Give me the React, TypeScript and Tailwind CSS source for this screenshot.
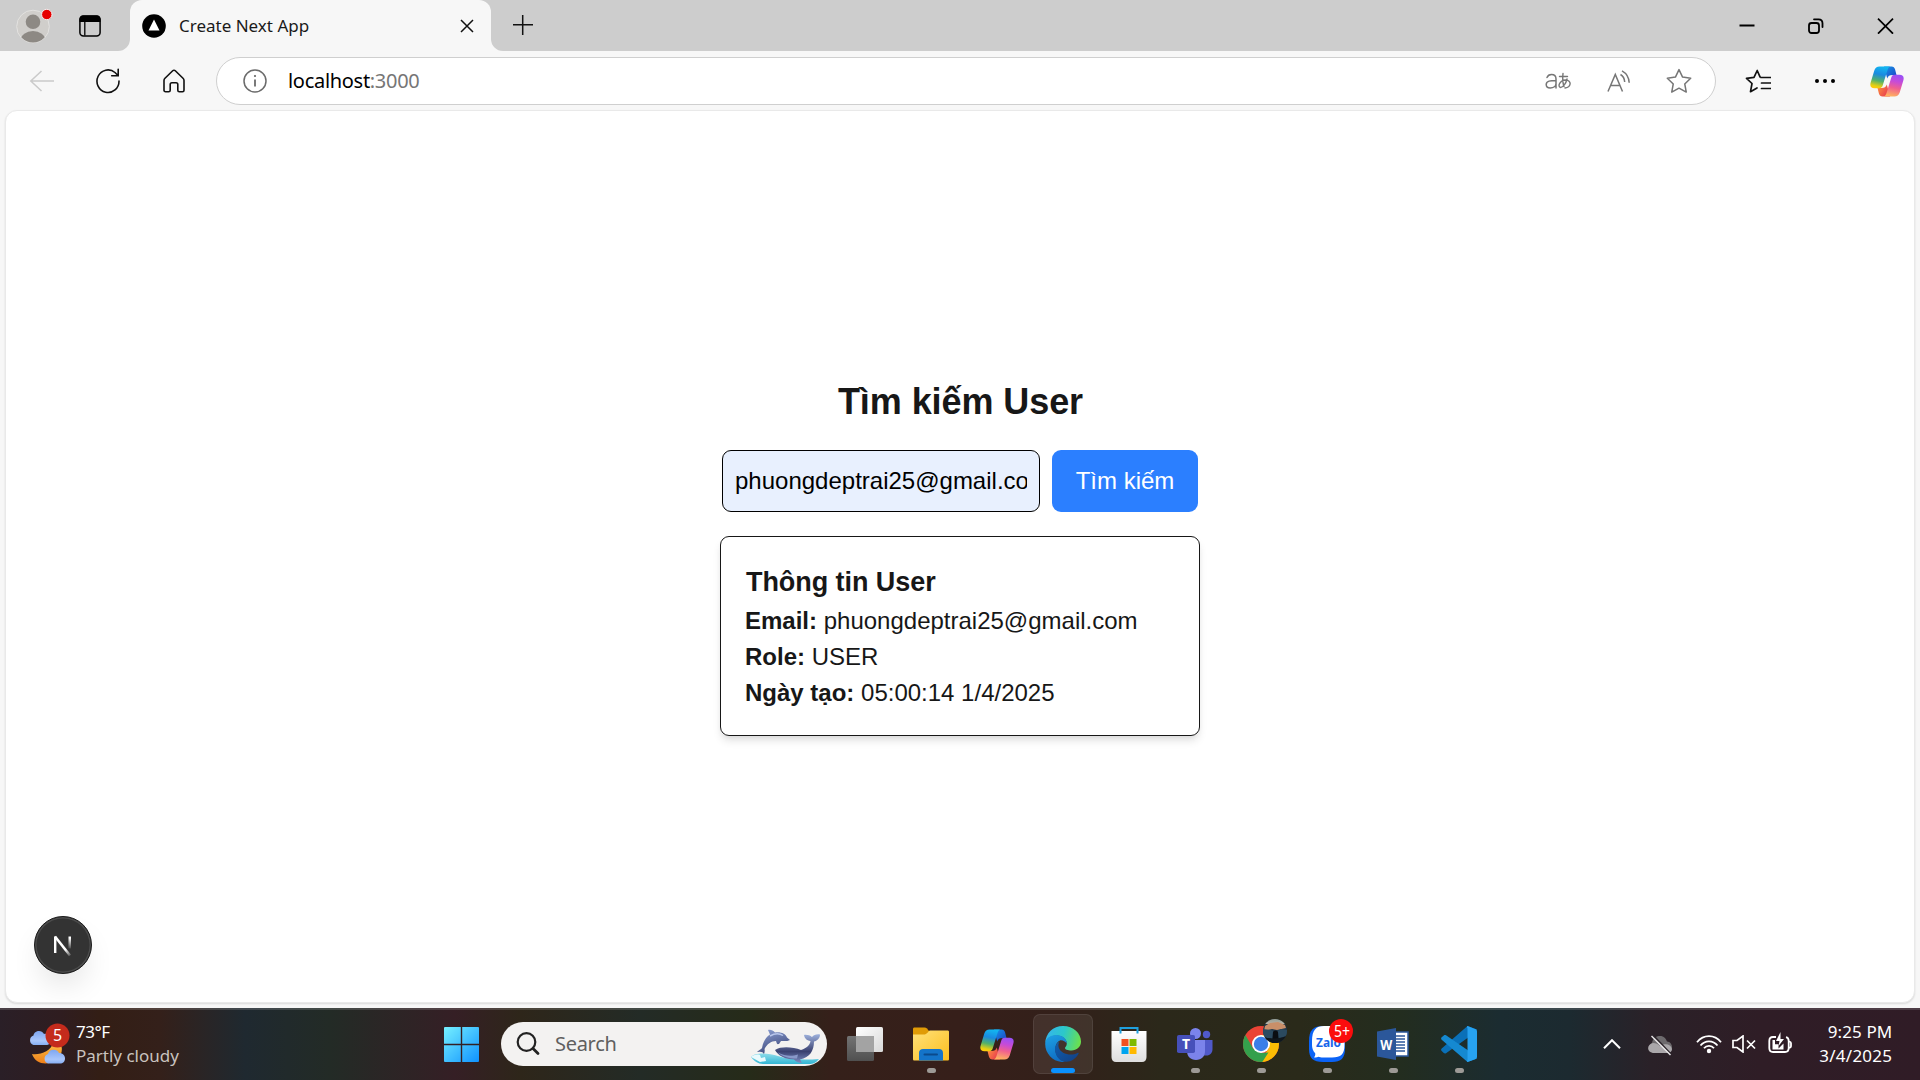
import type { ReactNode } from "react";

const UI = "font-['Noto_Sans','Open_Sans',sans-serif]";

function Avatar() {
  return (
    <svg width="38" height="38" viewBox="0 0 38 38" className="shrink-0">
      <defs>
        <clipPath id="av"><circle cx="18" cy="19.500" r="16" /></clipPath>
      </defs>
      <circle cx="18" cy="19.500" r="16.300" fill="#d0cecb" stroke="#e3e2e0" strokeWidth="1" />
      <circle cx="18" cy="14.800" r="7.300" fill="#8d8984" />
      <ellipse cx="18" cy="33" rx="12.300" ry="9" fill="#8d8984" clipPath="url(#av)" />
      <circle cx="31.800" cy="7.500" r="5.200" fill="#e60000" stroke="#f3f0f0" strokeWidth="1" />
    </svg>
  );
}

function TabActions() {
  return (
    <svg width="22" height="22" viewBox="0 0 22 22" fill="none" className="shrink-0">
      <rect x="0.900" y="1" width="20.200" height="20" rx="3.500" stroke="#000" strokeWidth="1.500" />
      <path d="M.5 7V4.200A3.500 3.500 0 0 1 4 .5h14a3.500 3.500 0 0 1 3.500 3.700V7z" fill="#000" />
      <path d="M5.800 7v13.500" stroke="#000" strokeWidth="1.300" />
    </svg>
  );
}

function Copilot({ id }: { id: string }) {
  return (
    <svg width="34" height="31" viewBox="0 0 34 31" className="shrink-0">
      <defs>
        <linearGradient id={id + "a"} x1="0.5" y1="0" x2="0.300" y2="1">
          <stop offset="0" stopColor="#12b5f0" />
          <stop offset="0.350" stopColor="#1a8ae0" />
          <stop offset="0.650" stopColor="#52b06b" />
          <stop offset="0.900" stopColor="#e6cf12" />
          <stop offset="1" stopColor="#ffcb0b" />
        </linearGradient>
        <linearGradient id={id + "b"} x1="0.600" y1="0" x2="0.400" y2="1">
          <stop offset="0" stopColor="#9a50f5" />
          <stop offset="0.300" stopColor="#c64bd8" />
          <stop offset="0.600" stopColor="#f0608f" />
          <stop offset="1" stopColor="#ffb25f" />
        </linearGradient>
        <linearGradient id={id + "c"} x1="0" y1="0" x2="1" y2="1">
          <stop offset="0" stopColor="#1699e8" />
          <stop offset="1" stopColor="#1d3fc4" />
        </linearGradient>
        <linearGradient id={id + "d"} x1="0" y1="0" x2="1" y2="0.600">
          <stop offset="0" stopColor="#ff9a3d" />
          <stop offset="1" stopColor="#e8384f" />
        </linearGradient>
      </defs>
      <path d="M14 .5h7.500c2 0 3 1 3.600 3l1.400 5.500h-4c-3 0-4.500 1-5.300 3.500z" fill={`url(#${id}c)`} />
      <path d="M20 30.500h-7.500c-2 0-3-1-3.600-3L7.500 22h4c3 0 4.500-1 5.300-3.500z" fill={`url(#${id}d)`} />
      <path d="M9.500.5H20c-1.500.7-2 2-2.500 3.500L12.700 19.500c-.6 2-1.700 2.700-3.500 2.700H4.500C1 22.200-.3 20 .6 16.800L4.300 4.500C5.200 1.700 6.900.5 9.500.5z" fill={`url(#${id}a)`} />
      <path d="M24.500 30.500H14c1.500-.7 2-2 2.500-3.500l4.800-15.500c.6-2 1.700-2.700 3.500-2.700h4.700c3.500 0 4.800 2.200 3.900 5.400l-3.700 12.300c-.9 2.800-2.600 4-5.200 4z" fill={`url(#${id}b)`} />
    </svg>
  );
}

function TabBar() {
  return (
    <div className="flex h-[51px] bg-[#cdcdcd]">
      <div className="flex w-[130px] items-center gap-[26px] pl-[15px]">
        <Avatar />
        <TabActions />
      </div>
      <div className="relative flex w-[361px] items-center rounded-t-[12px] bg-[#f7f7f7] pr-[17px] pl-[12px]">
        <svg width="12" height="12" viewBox="0 0 12 12" className="absolute bottom-0 -left-[12px]"><path d="M12 0v12H0A12 12 0 0 0 12 0z" fill="#f7f7f7" /></svg>
        <svg width="12" height="12" viewBox="0 0 12 12" className="absolute -right-[12px] bottom-0"><path d="M0 0v12h12A12 12 0 0 1 0 0z" fill="#f7f7f7" /></svg>
        <svg width="24" height="24" viewBox="0 0 24 24"><circle cx="12" cy="12" r="11.800" fill="#000" /><path d="M12 5.500l5.500 11h-11z" fill="#fff" /></svg>
        <span className={UI + " ml-[13px] grow text-[17px] text-[#1a1a1a]"}>Create Next App</span>
        <svg width="14" height="14" viewBox="0 0 14 14" stroke="#111" strokeWidth="1.500"><path d="M1 1l12 12M13 1L1 13" /></svg>
      </div>
      <div className="flex grow items-center justify-between pr-[26px] pl-[21px]">
        <svg width="22" height="22" viewBox="0 0 22 22" stroke="#111" strokeWidth="1.500" className="mb-[2px]"><path d="M10.700 1v20M1 10.800h20" /></svg>
        <div className="flex items-center gap-[53px]">
          <svg width="16" height="16" viewBox="0 0 16 16"><path d="M.5 7.500h15" stroke="#000" strokeWidth="2" /></svg>
          <svg width="16" height="16" viewBox="0 0 16 16" fill="none" stroke="#000" strokeWidth="1.800" strokeLinecap="round"><rect x="1" y="5" width="10" height="10" rx="2.500" /><path d="M6 1.300h4.500c2.600 0 4 1.500 4 4V9" /></svg>
          <svg width="17" height="16" viewBox="0 0 17 16" stroke="#000" strokeWidth="1.700"><path d="M1 .7l15 15M16 .7l-15 15" /></svg>
        </div>
      </div>
    </div>
  );
}

const STAR = "M12 1.500l3.300 6.900 7.500 1-5.500 5.300 1.400 7.500L12 18.600l-6.700 3.600 1.400-7.500L1.200 9.400l7.500-1z";

function Toolbar() {
  return (
    <div className="flex h-[59px] items-center bg-[#f7f7f7] pt-[1px]">
      <svg width="26" height="22" viewBox="0 0 26 22" fill="none" stroke="#cacaca" strokeWidth="1.500" className="ml-[29px] shrink-0"><path d="M12.500 1L1.800 11l10.700 10M1.800 11H25" /></svg>
      <svg width="24" height="26" viewBox="0 0 24 26" fill="none" stroke="#111" strokeWidth="1.600" strokeLinecap="round" className="ml-[41px] shrink-0"><path d="M23 13a11 11.300 0 1 1-4-8.500L22 7.500M22.200 1.300v6.500h-6.500" /></svg>
      <svg width="22" height="24" viewBox="0 0 22 24" fill="none" stroke="#111" strokeWidth="1.600" strokeLinejoin="round" className="ml-[43px] shrink-0"><path d="M1 11.500c0-1 .4-1.700 1-2.300l7.700-7.500c.7-.7 1.900-.7 2.600 0L20 9.200c.6.600 1 1.300 1 2.300v9.700c0 .9-.6 1.500-1.500 1.500h-3.200c-.9 0-1.500-.6-1.500-1.500v-5.700c0-1-.7-1.700-1.700-1.700h-4.200c-1 0-1.700.7-1.700 1.700v5.700c0 .9-.6 1.500-1.500 1.500H2.500C1.600 22.700 1 22.100 1 21.200z" /></svg>
      <div className="ml-[31px] flex h-[48px] w-[1500px] shrink-0 items-center rounded-full border border-[#cfcfcf] bg-white pr-[23px] pl-[26px]">
        <svg width="24" height="24" viewBox="0 0 24 24" fill="none" stroke="#6b6b6b" strokeWidth="1.500"><circle cx="12" cy="12" r="11" /><path d="M12 10.500V17.500" strokeWidth="1.800" /><circle cx="12" cy="7" r="0.700" fill="#6b6b6b" strokeWidth="1" /></svg>
        <span className={UI + " ml-[21px] grow text-[20px] tracking-[-0.300px] text-black"}>localhost<span className="text-[#767676]">:3000</span></span>
        <svg width="27" height="20" viewBox="0 0 27 20" fill="none" stroke="#767676" strokeWidth="1.500" strokeLinecap="round">
          <path d="M2 6.500c.8-2 2.300-3 4.500-3 3 0 4.500 1.600 4.500 4.500v9M11 9.500c-5.500 0-9.800.3-9.800 4 0 2.200 1.600 3.500 4 3.500 3.300 0 5.800-2 5.800-4.500" />
          <path d="M14.500 5.500h8M18 2.500c-.5 4-.4 9 1 13M22 8c-1 4.500-4 8.500-6.500 8.500-3.500-.8-.3-7.500 5-7.500 6.500.2 6 7-.5 8" strokeWidth="1.400" />
        </svg>
        <svg width="24" height="22" viewBox="0 0 24 22" fill="none" stroke="#767676" strokeWidth="1.500" className="ml-[35px]">
          <path d="M1 21.500L8.300 4.500 15.500 21.500M3.700 15.500h9.200M13.500 4.500c2.500 1.500 4 4 4.200 7.500M15 .8c4.500 2.500 7 6.500 7.200 12" />
        </svg>
        <svg width="26" height="26" viewBox="0 0 24 24" fill="none" stroke="#767676" strokeWidth="1.400" strokeLinejoin="round" className="ml-[35px]"><path d={STAR} /></svg>
      </div>
      <svg width="26" height="26" viewBox="0 0 26 26" fill="none" stroke="#111" strokeWidth="1.700" strokeLinejoin="round" strokeLinecap="round" className="ml-[29px] shrink-0"><path d="M15 8.800L12.200 2.500 9 9.300l-7.500 1 5.500 5.200-1.500 8.200 6.500-3.800M16 9.500h9.500M16.500 15h9M16.500 20.500h9" /></svg>
      <svg width="22" height="6" viewBox="0 0 22 6" className="ml-[43px] shrink-0"><circle cx="3" cy="3" r="2" /><circle cx="11" cy="3" r="2" /><circle cx="19" cy="3" r="2" /></svg>
      <div className="ml-[34px] shrink-0"><Copilot id="cpa" /></div>
    </div>
  );
}

function Field({ label, value }: { label: string; value: string }) {
  return <p className="text-[24px] leading-[36px] whitespace-nowrap"><strong>{label}</strong> {value}</p>;
}

function NextBadge() {
  return (
    <div className="absolute bottom-[28px] left-[28px] flex size-[58px] items-center justify-center rounded-full border border-[#1c1c1c] bg-[#333] shadow-[0_16px_32px_-8px_rgba(0,0,0,0.14),inset_0_0_0_1.500px_#4c4c4c]">
      <svg width="22" height="24" viewBox="0 0 22 24" fill="none">
        <defs>
          <linearGradient id="n1" x1="8" y1="10" x2="19" y2="23" gradientUnits="userSpaceOnUse"><stop offset="0.500" stopColor="#fff" /><stop offset="1" stopColor="#fff" stopOpacity="0.100" /></linearGradient>
          <linearGradient id="n2" x1="0" y1="2" x2="0" y2="17" gradientUnits="userSpaceOnUse"><stop offset="0.200" stopColor="#fff" /><stop offset="1" stopColor="#fff" stopOpacity="0" /></linearGradient>
        </defs>
        <path d="M3.200 20V3.500" stroke="#fff" strokeWidth="2.400" />
        <path d="M3 3.500l15 19" stroke="url(#n1)" strokeWidth="2.600" />
        <path d="M16.500 3.500h2.500V15.500h-2.500z" fill="url(#n2)" />
      </svg>
    </div>
  );
}

function Page() {
  return (
    <div className="h-[898px] bg-[#f7f7f7] px-[5px]">
      <div className="relative flex h-[893px] flex-col items-center justify-center rounded-[12px] border border-[#e9e9e9] bg-white font-['Liberation_Sans',Arial,sans-serif] text-[#171717] shadow-[0_1px_2px_rgba(0,0,0,0.120)]">
        <h1 className="pl-[1px] text-[36px] leading-[48px] font-bold tracking-[-0.080px]">Tìm kiếm User</h1>
        <div className="mt-[24px] flex gap-[12px]">
          <input type="email" defaultValue="phuongdeptrai25@gmail.com" className="h-[62px] w-[318px] rounded-[9px] border border-black bg-[#e8f0fe] px-[12px] text-[24px] text-black" />
          <button className="h-[62px] w-[146px] rounded-[9px] bg-[#2b7fff] text-[24px] text-white">Tìm kiếm</button>
        </div>
        <div className="mt-[24px] h-[200px] w-[480px] rounded-[9px] border border-[#171717] p-[24px] shadow-[0_6px_9px_-1.500px_rgba(0,0,0,0.100),0_3px_6px_-3px_rgba(0,0,0,0.100)]">
          <h2 className="pl-[1px] text-[27px] leading-[42px] font-bold tracking-[-0.060px]">Thông tin User</h2>
          <Field label="Email:" value="phuongdeptrai25@gmail.com" />
          <Field label="Role:" value="USER" />
          <Field label="Ngày tạo:" value="05:00:14 1/4/2025" />
        </div>
        <NextBadge />
      </div>
    </div>
  );
}

function Weather() {
  return (
    <svg width="42" height="42" viewBox="0 0 42 42" className={UI + " shrink-0"}>
      <defs>
        <linearGradient id="cl" x1="0" y1="0" x2="0" y2="1"><stop offset="0" stopColor="#7ea6f0" /><stop offset="0.700" stopColor="#a9c6fb" /><stop offset="1" stopColor="#86aef2" /></linearGradient>
        <linearGradient id="mo" x1="0" y1="0" x2="0" y2="1"><stop offset="0" stopColor="#ffc54a" /><stop offset="1" stopColor="#ee7f1a" /></linearGradient>
      </defs>
      <path d="M4 31c8 1 19-2 22-13 8 1 9 7 7 13-3 10-24 15-29 0z" fill="url(#mo)" />
      <path d="M5.500 22a5 5 0 0 1 0-9.500c.5-5 8-6.500 10.500-1.500 5-1 7 2 7 5.500s-2 5.500-5 5.500z" fill="url(#cl)" />
      <path d="M20 40.500a5 5 0 0 1 0-9.500c.8-5 9-6 11-1 4 0 6 2.500 6 5.500s-2 5-5 5z" fill="url(#cl)" />
      <circle cx="29.500" cy="12.500" r="12" fill="#c42b1c" />
      <text x="29.500" y="18" fontSize="16" fill="#fff" textAnchor="middle">5</text>
    </svg>
  );
}

function Dolphins() {
  return (
    <svg width="72" height="36" viewBox="0 0 72 36">
      <defs>
        <linearGradient id="dp" x1="0" y1="0" x2="0.400" y2="1"><stop offset="0" stopColor="#8fa3d6" /><stop offset="1" stopColor="#3f4a7c" /></linearGradient>
        <linearGradient id="wh" x1="0" y1="0" x2="0" y2="1"><stop offset="0" stopColor="#9db0dc" /><stop offset="0.600" stopColor="#3a4170" /><stop offset="1" stopColor="#7c8ec4" /></linearGradient>
        <linearGradient id="wt" x1="0" y1="0" x2="0" y2="1"><stop offset="0" stopColor="#8fdcea" /><stop offset="1" stopColor="#31b6d4" /></linearGradient>
      </defs>
      <path d="M1 28c4-5 18-4 27-1 12 4 28 4 41 3-3 4-6 5-10 5H13C8 35 4 32 1 28z" fill="url(#wt)" />
      <path d="M1 28c2-2 6-3 9-2l1 3 4-1 1 4-6 1z" fill="#e9fafd" />
      <path d="M7 23c2-2 4-2.500 5-4 1-6 4-11 8-13.500L18 1c3-.5 5 .5 7 2.500C31 2.500 36 5 37 8.500l3 2.500c-3 1.500-6 1-9 1l-2 3c-2 .5-2 0-3-3-5 0-9 3-11.500 8 .5 2 0 3.500-.5 5-1-2-3-2.500-6-2z" fill="url(#dp)" />
      <path d="M20 7c5-3 10-2.500 13-.5" stroke="#b9c7ec" strokeWidth="1.500" fill="none" />
      <path d="M25 21c6-4 18-3 26 0 6-2 9-5 9.500-9-4-.5-6-3-6.500-6 3-.5 6 .5 8 2 2-2 4-3 8-2.500 0 4-3 6.500-6 7 0 9-4 16-14 18l2 3.500c-4 0-6-1.500-8-3.500-9 0-16-4-19-9.500z" fill="url(#wh)" />
      <path d="M28 23.500c7 4 14 4 20 2l-1 4c-8 0-15-2-19-6z" fill="#8998c9" />
    </svg>
  );
}

function TaskView() {
  return (
    <svg width="36" height="36" viewBox="0 0 36 36">
      <defs><linearGradient id="tv" x1="0" y1="0" x2="1" y2="1"><stop offset="0" stopColor="#fff" /><stop offset="1" stopColor="#d8d8d8" /></linearGradient>
        <linearGradient id="tw" x1="0" y1="0" x2="0" y2="1"><stop offset="0" stopColor="#737373" /><stop offset="1" stopColor="#505050" /></linearGradient></defs>
      <rect x="0" y="10" width="27" height="25" rx="1.500" fill="url(#tw)" />
      <rect x="9" y="1" width="27" height="25" rx="1.500" fill="url(#tv)" />
      <path d="M9 10h18v16H9z" fill="#a3a3a3" />
    </svg>
  );
}

function Explorer() {
  return (
    <svg width="36" height="34" viewBox="0 0 36 34">
      <defs><linearGradient id="fo" x1="0" y1="0" x2="1" y2="1"><stop offset="0" stopColor="#ffe17a" /><stop offset="1" stopColor="#fcbf1e" /></linearGradient></defs>
      <path d="M0 8V2C0 1 .6.500 1.500.5h10c1 0 1.800.3 2.500 1L16 4v4z" fill="#e09b06" />
      <path d="M0 7.500h11c1.500 0 2.300-.6 3.300-1.500l1.200-1.500c.6-.7 1-1 2-1H34.500c1 0 1.500.5 1.500 1.500v27c0 1-.5 1.500-1.500 1.500h-33C.5 33.500 0 33 0 32z" fill="url(#fo)" />
      <path d="M6 33.500V26c0-2.500 1.500-4 4-4h16c2.500 0 4 1.500 4 4v7.500z" fill="#1474c9" />
      <rect x="10.500" y="26.500" width="14.500" height="2" rx="1" fill="#0b4a8c" />
    </svg>
  );
}

function Edge() {
  return (
    <svg width="36" height="36" viewBox="0 0 36 36">
      <defs>
        <linearGradient id="e1" x1="0" y1="0.300" x2="1" y2="0.500"><stop offset="0" stopColor="#35b4ee" /><stop offset="0.500" stopColor="#2cc8c9" /><stop offset="1" stopColor="#6be04e" /></linearGradient>
        <linearGradient id="e2" x1="0.200" y1="0" x2="0.500" y2="1"><stop offset="0" stopColor="#1d9fe3" /><stop offset="1" stopColor="#0f6cc2" /></linearGradient>
        <linearGradient id="e3" x1="0" y1="0" x2="1" y2="1"><stop offset="0" stopColor="#0f5eb0" /><stop offset="1" stopColor="#123f82" /></linearGradient>
      </defs>
      <path d="M.2 17C.8 7 8 0 18 0c10.500 0 18 7.500 18 15.500 0 5.500-4.500 9-9.500 9-4 0-6.500-1-6.500-2.500 0-1 1.800-1.800 1.800-4.500C21.800 13 17 9.500 11.500 9.500 6 9.500 1.500 12.500.2 17z" fill="url(#e1)" />
      <path d="M.2 18c0-5.500 5-9 11-9 6.500 0 10.600 4 10.600 8.500-1.500-2.200-3.500-3.500-6.500-3.300-3 1.300-5 4.300-5 8.800 0 6 4 11 9.700 13C9.500 37 .2 28.500.2 18z" fill="url(#e2)" />
      <path d="M14.500 15.500c-3.500 2-5 5.500-4.500 9 .8 6.500 5.500 11.500 11.500 11.300 5 0 9.500-3.300 12-8 .5-1-.3-1.300-1-.8-7 3.800-17 .5-18.800-5.500-.6-2.300-.2-4.500.8-6z" fill="url(#e3)" />
    </svg>
  );
}

function Store() {
  return (
    <svg width="36" height="36" viewBox="0 0 36 36">
      <defs><linearGradient id="st" x1="0" y1="0" x2="0" y2="1"><stop offset="0" stopColor="#fff" /><stop offset="1" stopColor="#dedede" /></linearGradient></defs>
      <path d="M.5 5h35v26c0 3-1.700 5-4.500 5H5c-2.800 0-4.500-2-4.500-5z" fill="url(#st)" />
      <path d="M9.500 7.500V2h17v5.500" stroke="#1fa0de" strokeWidth="2" fill="none" />
      <path d="M10.500 13h7v7h-7z" fill="#f25022" /><path d="M18.500 13h7v7h-7z" fill="#7fba00" />
      <path d="M10.500 21h7v7h-7z" fill="#00a4ef" /><path d="M18.500 21h7v7h-7z" fill="#ffb900" />
    </svg>
  );
}

function Teams() {
  return (
    <svg width="36" height="36" viewBox="0 0 36 36" className={UI}>
      <circle cx="29.500" cy="8.500" r="3.700" fill="#5059c9" />
      <path d="M24 14h11.500v9c0 4-2.500 6.500-6 6.500H24z" fill="#5059c9" />
      <circle cx="18.500" cy="7.500" r="5.500" fill="#7b83eb" />
      <path d="M10 14h18v11c0 5.500-3.500 9-9 9s-9-3.500-9-9z" fill="#7b83eb" />
      <rect x="0" y="9" width="18" height="18" rx="1.800" fill="#4650ba" />
      <text x="9" y="23" fontSize="14" fontWeight="700" fill="#fff" textAnchor="middle">T</text>
    </svg>
  );
}

function Chrome() {
  return (
    <svg width="44" height="44" viewBox="0 0 44 44">
      <defs>
        <clipPath id="cr"><circle cx="18" cy="26" r="18" /></clipPath>
        <clipPath id="ph"><circle cx="32" cy="13" r="12" /></clipPath>
        <linearGradient id="sky" x1="0" y1="0" x2="0" y2="1"><stop offset="0" stopColor="#8f9a92" /><stop offset="1" stopColor="#b7b3a6" /></linearGradient>
      </defs>
      <g clipPath="url(#cr)">
        <path d="M0 8h36v36H0z" fill="#ea4335" />
        <path d="M18 17h19v28H16l10-15z" fill="#fbbc04" />
        <path d="M-1 15L2.400 17l7.800 13.500L18 35l7.500-.5L18 46H-2z" fill="#34a04c" />
      </g>
      <circle cx="18" cy="26" r="9" fill="#fff" /><circle cx="18" cy="26" r="7.200" fill="#3b7ee8" />
      <g clipPath="url(#ph)">
        <path d="M20 0h24v26H20z" fill="#22384a" />
        <path d="M20 0h24v6H20z" fill="url(#sky)" />
        <path d="M22 8l5-3 8-1 7 3 1 3-9 2-5-1-8 2z" fill="#c98f69" />
        <path d="M20 11l8 1 5 2 5-3 6 1v5l-6 3H24l-4-3z" fill="#2b4a60" />
        <path d="M30 14c1-2 4-2 5 0l1 12h-7z" fill="#0a0d12" />
        <path d="M20 19c8 2 16 2 24-1v8H20z" fill="#10171d" />
      </g>
    </svg>
  );
}

function Zalo() {
  return (
    <svg width="44" height="44" viewBox="0 0 44 44" className={UI}>
      <path d="M0 23C0 12 4 8 15 8h8c9 0 13 4 13 13v10c0 9-4 13-13 13h-9C4 44 0 40 0 31z" fill="#0b63f6" />
      <path d="M3 23C3 12 7 8 15 8h8c9 0 12.500 4 12.500 13v6c0 9-3.500 12.500-12.500 12.500h-9c-2 0-3.500-.4-4.500-.8-1.500.8-3 1-4.500.6 1-1 1.500-2.500 1.200-4C4 33 3 30 3 27z" fill="#fff" />
      <text x="7" y="29" fontSize="13" fontWeight="700" fill="#1565ea" textLength="25" lengthAdjust="spacingAndGlyphs">Zalo</text>
      <circle cx="32" cy="13" r="12" fill="#fb0d0d" />
      <text x="25" y="18.500" fontSize="15.500" fill="#fff" textLength="16" lengthAdjust="spacingAndGlyphs">5+</text>
    </svg>
  );
}

function Word() {
  return (
    <svg width="32" height="32" viewBox="0 0 32 32" className={UI}>
      <path d="M17 4h14v24H17z" fill="#fff" stroke="#2b579a" strokeWidth="1.500" />
      <path d="M19 8h9M19 11h9M19 14h9M19 17h9M19 20h9M19 23h9" stroke="#2b579a" strokeWidth="1.400" />
      <path d="M0 3.500L19 0v32L0 28.500z" fill="#2b579a" />
      <text x="9.300" y="21.500" fontSize="14.500" fontWeight="700" fill="#fff" textAnchor="middle" textLength="12" lengthAdjust="spacingAndGlyphs">W</text>
    </svg>
  );
}

function Code() {
  return (
    <svg width="36" height="36" viewBox="0 0 36 36">
      <path d="M26.500 0L36 3.500 26.500 12 5 27.200c-.7.500-1.500.5-2.200-.1L.7 25c-.8-.7-.8-1.800 0-2.500z" fill="#0a70b8" />
      <path d="M26.500 36L36 32.500 26.500 24 5 9.300c-.7-.5-1.500-.5-2.200.1L.7 11.300c-.8.700-.8 1.800 0 2.500z" fill="#1589d1" />
      <path d="M26.500 36c-1.300-.3 0-1.500 0-2.500v-31c0-1-1.300-2 0-2.500L34.700 3.200c.8.400 1.300 1.200 1.300 2V31c0 .8-.5 1.500-1.300 2z" fill="#27a2f0" />
    </svg>
  );
}

function Slot({ children, state, raised }: { children: ReactNode; state?: "open" | "active"; raised?: boolean }) {
  return (
    <div className="flex w-[66px] justify-center">
      <div className={state === "active" ? "relative flex size-[60px] items-center justify-center rounded-[7px] border border-white/8 bg-white/8" : "relative flex size-[60px] items-center justify-center"}>
        <div className={raised ? "mb-[8px] ml-[8px]" : ""}>{children}</div>
        {state === "open" && <div className="absolute bottom-[1px] h-[5px] w-[9px] rounded-full bg-[#9d9a96]" />}
        {state === "active" && <div className="absolute bottom-0 h-[5px] w-[24px] rounded-full bg-[#0a91ff]" />}
      </div>
    </div>
  );
}

function Taskbar() {
  return (
    <div className={UI + " flex h-[72px] items-center border-t-2 border-white/15 bg-[linear-gradient(90deg,#2a1f27_0px,#2f1d20_60px,#331e15_100px,#34201a_160px,#1f2930_245px,#232b26_330px,#351f25_455px,#2e261a_520px,#232b26_640px,#262b19_750px,#35201a_830px,#361f1a_960px,#33201a_1060px,#2b281a_1160px,#2a2a1a_1300px,#232d1f_1400px,#1b2c31_1500px,#1c2a30_1570px,#2a2128_1650px,#2f1d26_1760px,#301c26_1920px)] pb-[2px]"}>
      <div className="flex w-[428px] items-center pl-[28px]">
        <Weather />
        <div className="ml-[6px] flex flex-col text-[17px] leading-[24px]">
          <span className="tracking-[-0.500px] text-white">73°F</span>
          <span className="text-[#c9c3bf]">Partly cloudy</span>
        </div>
      </div>
      <Slot>
        <svg width="35" height="35" viewBox="0 0 35 35">
          <defs><linearGradient id="wi" x1="0" y1="0" x2="35" y2="35" gradientUnits="userSpaceOnUse"><stop offset="0" stopColor="#76f0ff" /><stop offset="1" stopColor="#0f92ff" /></linearGradient></defs>
          <path d="M1 0h15.800v16.700H0V1a1 1 0 0 1 1-1zM18.200 0H34a1 1 0 0 1 1 1v15.700H18.200zM0 18.300h16.800V35H1a1 1 0 0 1-1-1zM18.200 18.300H35V34a1 1 0 0 1-1 1H18.200z" fill="url(#wi)" />
        </svg>
      </Slot>
      <div className="ml-[7px] flex h-[44px] w-[326px] items-center rounded-full bg-[#f3f2f1] pr-[5px] pl-[15px]">
        <svg width="24" height="24" viewBox="0 0 24 24" fill="none" stroke="#222" strokeWidth="2.200" strokeLinecap="round"><circle cx="10.500" cy="10" r="8.800" /><path d="M17 16.500l5 5" strokeWidth="2.800" /></svg>
        <span className="ml-[15px] grow text-[20px] tracking-[-0.300px] text-[#5f5f5f]">Search</span>
        <div className="mt-[5px]"><Dolphins /></div>
      </div>
      <div className="ml-[5px] flex">
        <Slot><TaskView /></Slot>
        <Slot state="open"><Explorer /></Slot>
        <Slot><Copilot id="cpb" /></Slot>
        <Slot state="active"><Edge /></Slot>
        <Slot><Store /></Slot>
        <Slot state="open"><Teams /></Slot>
        <Slot state="open" raised><Chrome /></Slot>
        <Slot state="open" raised><Zalo /></Slot>
        <Slot state="open"><Word /></Slot>
        <Slot state="open"><Code /></Slot>
      </div>
      <div className="flex grow items-center justify-end pr-[28px]">
        <svg width="18" height="10" viewBox="0 0 18 10" fill="none" stroke="#fff" strokeWidth="2"><path d="M1 9.200l8-8 8 8" /></svg>
        <svg width="26" height="22" viewBox="0 0 26 22" className="ml-[26px] mt-[3px]">
          <path d="M6 18a6 6 0 0 1-1-10C6 2 10 1 13 1c4 0 6 2.500 7 5.500 3 0 5 3 5 5.500 0 3.500-2 6-5 6z" fill="#6d6a6d" />
          <path d="M6 18c-7-1-6-9 0-10 3 0 5 1 7 3 5-3 11-2 12 3 0 2.500-2 4-5 4z" fill="#aaa7aa" />
          <path d="M6 0l18 19" stroke="#2a2228" strokeWidth="1.500" /><path d="M4.500 1l19 19" stroke="#e9e7e9" strokeWidth="1.500" />
        </svg>
        <svg width="26" height="20" viewBox="0 0 26 20" fill="none" stroke="#fff" strokeWidth="1.800" className="ml-[23px]"><path d="M1 8.200C7.500.2 18.500.2 25 8.200M4.500 11.500c4.500-5.600 12.500-5.600 17 0M8 14.300c2.500-3.200 7.500-3.200 10 0" /><circle cx="13" cy="17" r="2.200" fill="#fff" stroke="none" /></svg>
        <svg width="24" height="18" viewBox="0 0 24 18" fill="none" stroke="#fff" strokeWidth="1.700" className="ml-[10px]"><path d="M1 5.500h4L11 1v16l-6-4.500H1zM15 5.500l8 8M23 5.500l-8 8" /></svg>
        <svg width="24" height="22" viewBox="0 0 24 22" fill="none" stroke="#fff" strokeWidth="1.800" className="mb-[3px] ml-[12px]"><path d="M8 5H5C2.500 5 1.300 6.500 1.300 9v7c0 2.500 1.200 4 3.700 4h12c2.500 0 3.700-1.500 3.700-4V9c0-2-.9-3.500-2.700-3.900M21.500 9.500c1 .3 1.500.8 1.500 1.700v3c0 .8-.5 1.300-1.500 1.600" /><path d="M4.500 8h2.500v4.200h3.500V16.500l5-5V17.500h-11z" fill="#fff" stroke="none" /><path d="M12.500 0L8 9h3.500L10.500 14l5.500-7h-3.500z" fill="#fff" stroke="none" /></svg>
        <div className="ml-[18px] flex w-[82px] flex-col items-end text-[17px] leading-[24px] text-white">
          <span className="-mr-[0.300px] tracking-[0.100px] whitespace-nowrap">9:25 PM</span>
          <span className="-mr-[0.300px] tracking-[0.250px] whitespace-nowrap">3/4/2025</span>
        </div>
      </div>
    </div>
  );
}

export default function App() {
  return (
    <div className="flex h-[1080px] w-[1920px] flex-col overflow-hidden bg-[#f7f7f7]">
      <TabBar />
      <Toolbar />
      <Page />
      <Taskbar />
    </div>
  );
}
